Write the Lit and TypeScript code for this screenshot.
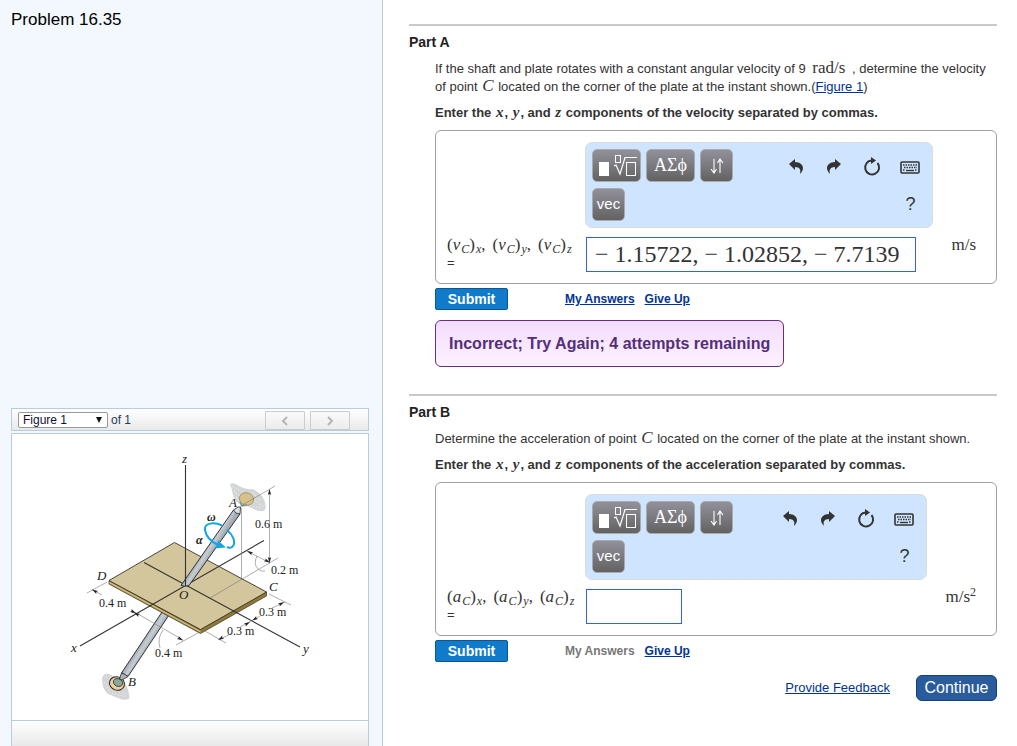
import { LitElement, html, svg, css, nothing } from "lit";
import { customElement, property } from "lit/decorators.js";

@customElement("plate-figure")
class PlateFigure extends LitElement {
  static styles = css`
    :host { display: block; }
    .drawing { display: block; width: 100%; height: auto; }
    .label { font: 12px "Liberation Serif", serif; fill: #222; }
    .name { font: italic 13px "Liberation Serif", serif; fill: #222; }
    .greek { font: italic bold 12px "Liberation Serif", serif; fill: #222; }
    .axis { stroke: #333; stroke-width: 1.1; fill: none; }
    .thin { stroke: #777; stroke-width: 0.6; fill: none; }
    .head { fill: #222; }
    .cloud { fill: #d3d5d7; }
    .speckle { stroke: #eceded; stroke-width: 1.2; stroke-dasharray: 1 2; fill: none; }
    .top { fill: #d3c69c; stroke: #39342a; stroke-width: 0.9; }
    .side { fill: #8f7a35; stroke: #39342a; stroke-width: 0.7; }
    .shaft { stroke: #30343a; stroke-width: 1; }
    .spin { fill: none; stroke: #16a5e4; stroke-width: 2; }
    .spin-head { fill: #16a5e4; }
  `;

  private arrow(x: number, y: number, angle: number) {
    return svg`<path class="head" d="M0 0L-6 -1.7L-4.8 0L-6 1.7Z" transform="translate(${x} ${y}) rotate(${angle})"></path>`;
  }

  render() {
    return html`
      <svg class="drawing" viewBox="12 434 356 286" role="img" aria-label="Shaft AB with plate">
        <defs>
          <linearGradient id="steel" gradientUnits="userSpaceOnUse" x1="206" y1="545" x2="214" y2="550">
            <stop offset="0" stop-color="#9fa8af"></stop>
            <stop offset="0.5" stop-color="#c6cdd3"></stop>
            <stop offset="1" stop-color="#a3acb3"></stop>
          </linearGradient>
          <linearGradient id="steel2" gradientUnits="userSpaceOnUse" x1="141" y1="642" x2="149" y2="647">
            <stop offset="0" stop-color="#9fa8af"></stop>
            <stop offset="0.5" stop-color="#c6cdd3"></stop>
            <stop offset="1" stop-color="#a3acb3"></stop>
          </linearGradient>
        </defs>

        <path class="cloud" d="M230 484Q234 482 239 486Q245 490 252 489Q258 491 262 496Q267 503 265 510Q261 513 254 509Q248 506 241 505Q234 501 233 495Q232 489 230 484Z"></path>
        <path class="speckle" d="M233 487L243 492M234 491L241 497M236 497L240 502M253 493L261 501M250 506L262 508M255 500L263 507"></path>
        <path class="cloud" d="M102 679Q103 673 109 674Q116 678 121 679Q127 684 128 690Q130 696 129 699Q123 701 118 698Q113 696 108 694Q102 689 102 679Z"></path>
        <path class="speckle" d="M104 682L110 692M112 693L126 697M119 692L127 694M106 677L110 677"></path>

        <path class="shaft" fill="url(#steel2)" d="M162 612L121.500 673L128 676.500L169 615Z"></path>
        <ellipse cx="117" cy="683.5" rx="7.6" ry="6.7" fill="#ead09a" stroke="#222" transform="rotate(18 117 683.5)"></ellipse>
        <ellipse cx="118" cy="682.5" rx="4.8" ry="3.8" fill="#8ba69b" stroke="#222" stroke-width=".7" transform="rotate(24 118 682.5)"></ellipse>
        <path d="M119.500 679L121.500 673Q125 674 128 676.500L122 680Z" fill="#aeb6b8" stroke="#222" stroke-width=".8"></path>

        <path class="side" d="M109 580.500V584L200.500 633.500L266.500 596V592L200.500 629.500Z"></path>
        <path d="M109.500 581.500L200.500 631L200.500 632.500L109.500 583.500Z" fill="#cdbb7a"></path>
        <path class="top" d="M174.500 542.500L266.500 592L200.500 629.500L109 580.500Z"></path>

        <path class="axis" d="M185.500 465V586M144 562.500L300 647M80 646L264 540.500"></path>
        <path class="thin" d="M210 598L278 558M241.500 508V580M269.500 490V562M247 551L270 563M92 589.500L102 595M131 610L183 640M87 593L107 582M176 645L198 633M205 631L226 643M269 594L291 605M219 640L232 633M272 608L285 602M251 621L240 627M254 620L260 616"></path>
        <path class="thin" d="M257 556Q253 564 258 569Q261 572 265 571M163 630Q157 638 160 648"></path>

        <path class="shaft" fill="url(#steel)" d="M181 585.500L233.500 510L240 514L189 585.500Q184 587 181 585.500Z"></path>
        <ellipse cx="246.5" cy="499" rx="7.2" ry="6.2" fill="#d9c18b" stroke="#9a8657" stroke-width=".7" transform="rotate(18 246.5 499)"></ellipse>
        <path d="M240 502L242 506L247 505" stroke="#719998" fill="none" stroke-width="1.5"></path>
        <path d="M233.500 510L238 507L240.500 507L240 514Q235 514 233.500 510Z" fill="#dce0e2" stroke="#222" stroke-width=".8"></path>
        <path class="thin" d="M240 506.500L275 486"></path>
        <path class="axis" d="M185.500 575V586"></path>

        <path class="spin" d="M222 525.500C214 521.500 204 523 205 530C206 537 212 542 218 545M227 530C233 535 236 542 233 546Q231 549 227 547"></path>
        <path class="spin-head" d="M226 547.500L214.500 548.500L217 545.500L218 540.500Z"></path>

        ${this.arrow(269.5, 489, -90)}${this.arrow(269.5, 563, 90)}
        ${this.arrow(247, 551, 207)}${this.arrow(270, 562.5, 27)}
        ${this.arrow(92, 589.5, 210)}${this.arrow(136, 613.5, 30)}${this.arrow(134, 612.5, 210)}${this.arrow(183, 640.5, 30)}
        ${this.arrow(218, 640, 150)}${this.arrow(250, 622, -30)}${this.arrow(252, 620.5, 150)}${this.arrow(284, 602, -30)}

        <text class="name" x="182" y="463">z</text>
        <text class="name" x="229" y="507">A</text>
        <text class="greek" x="207" y="521">ω</text>
        <text class="greek" x="196" y="544">α</text>
        <text class="name" x="97" y="580">D</text>
        <text class="name" x="179" y="599">O</text>
        <text class="name" x="269" y="591">C</text>
        <text class="name" x="71" y="652">x</text>
        <text class="name" x="303" y="653">y</text>
        <text class="name" x="128" y="686">B</text>
        <text class="label" x="255" y="528">0.6 m</text>
        <text class="label" x="271" y="574">0.2 m</text>
        <text class="label" x="99" y="607">0.4 m</text>
        <text class="label" x="259" y="616">0.3 m</text>
        <text class="label" x="227" y="635">0.3 m</text>
        <text class="label" x="155" y="657">0.4 m</text>
      </svg>`;
  }
}

@customElement("answer-box")
class AnswerBox extends LitElement {
  @property() symbol = "v";
  @property() value = "";
  @property({ type: Boolean }) squared = false;

  static styles = css`
    :host {
      display: grid;
      grid-template-columns: 138px minmax(0, 1fr) auto;
      padding: 11px 20px 11px 11px;
      border: 1px solid #a0a0a0;
      border-radius: 6px;
      font: 13px "Liberation Sans", Arial, sans-serif;
      color: #333;
    }
    .label { grid-row: 2; line-height: 20px; padding-top: 7px; }
    .math { display: flex; white-space: nowrap; gap: 7px; font: 17px/20px "Liberation Serif", serif; }
    .sub { font-size: 12px; line-height: 0; vertical-align: -3px; margin-left: 1px; }
    .equals { display: block; line-height: 16px; }
    .tools {
      grid-column: 2;
      box-sizing: border-box;
      height: 86px;
      display: flex;
      justify-content: space-between;
      padding: 6px 12px 6px 6px;
      border: 1px solid #dcdcdc;
      border-radius: 7px;
      background: #cfe5ff;
    }
    .group { display: grid; grid-template-columns: 49px 49px 33px; gap: 6px 5px; align-content: start; }
    .key {
      height: 33px;
      padding: 0;
      border: 1px solid #aaa;
      border-radius: 5px;
      background: linear-gradient(#92919b, #626262);
      color: #fff;
      display: flex;
      align-items: center;
      justify-content: center;
    }
    .greek { font: 18px "Liberation Serif", serif; }
    .vec { width: 33px; font: 15px "Liberation Sans", Arial, sans-serif; padding-bottom: 3px; }
    .actions { display: grid; grid-template-columns: repeat(4, 20px); column-gap: 18px; grid-template-rows: 36px 36px; }
    .action { border: 0; padding: 0; background: none; color: #333; display: flex; align-items: center; justify-content: center; }
    .help { grid-column: 4; font: 18px "Liberation Sans", Arial, sans-serif; padding-top: 2px; }
    .field {
      grid-column: 2;
      grid-row: 2;
      justify-self: start;
      box-sizing: border-box;
      width: 96px;
      height: 35px;
      margin: 9px 0 0 1px;
      padding: 0 8px;
      border: 1px solid #36c;
      border-radius: 0;
      background: #fff;
      color: #333;
      font: 24px "Liberation Serif", serif;
      outline: 0;
    }
    .filled { width: calc(100% - 18px); }
    .unit { grid-column: 3; grid-row: 2; margin-left: 18px; padding-top: 7px; font: 17px/20px "Liberation Serif", serif; }
    .power { font-size: 12px; line-height: 0; vertical-align: 6px; }
  `;

  render() {
    return html`
      <div class="tools">
        <div class="group">
          <button class="key" aria-label="Templates">
            <svg width="40" height="26" viewBox="0 0 40 26" fill="none" stroke="#fff">
              <rect x="2" y="9" width="10" height="14" fill="#fff" stroke="none"></rect>
              <rect x="18.500" y="2.500" width="5" height="7"></rect>
              <path d="M17 13l2-1 4 9 5-16.500h12" stroke-width="1.200"></path>
              <rect x="29.500" y="9.500" width="9" height="13"></rect>
            </svg>
          </button>
          <button class="key greek">ΑΣϕ</button>
          <button class="key" aria-label="Arrows">
            <svg width="16" height="18" viewBox="0 0 16 18" fill="none" stroke="#fff" stroke-width="1.100">
              <path d="M5 2v14M2 12l3 4 2.500-4M11 16V2M8.500 6L11 2l3 4"></path>
            </svg>
          </button>
          <button class="key vec">vec</button>
        </div>
        <div class="actions">
          <button class="action" aria-label="Undo">
            <svg width="16" height="18" viewBox="0 0 16 18" fill="#333"><path d="M1 6L7 1v3c5 0 8 3 8 6 0 2-1 4-3 6 1-4 0-7-5-7v3z"></path></svg>
          </button>
          <button class="action" aria-label="Redo">
            <svg width="16" height="18" viewBox="0 0 16 18" fill="#333"><path d="M15 6L9 1v3C4 4 1 7 1 10c0 2 1 4 3 6-1-4 0-7 5-7v3z"></path></svg>
          </button>
          <button class="action" aria-label="Reset">
            <svg width="18" height="20" viewBox="0 0 18 20"><path d="M9 3.500a7 7 0 1 0 5.500 2.500" fill="none" stroke="#333" stroke-width="2"></path><path d="M8 0l5 3.500-5 3.500z" fill="#333"></path></svg>
          </button>
          <button class="action" aria-label="Keyboard">
            <svg width="20" height="13" viewBox="0 0 20 13">
              <rect x="1" y="1" width="18" height="11" rx="1" fill="none" stroke="#333" stroke-width="1.600"></rect>
              <path d="M3 4h14M4 6.500h13M3 9h2M15 9h2" stroke="#333" stroke-width="1.300" stroke-dasharray="1.500 1"></path>
              <path d="M6 9.500h8" stroke="#333" stroke-width="1.400"></path>
            </svg>
          </button>
          <button class="action help" aria-label="Help">?</button>
        </div>
      </div>
      <label class="label" for="answer">
        <span class="math">${["x", "y", "z"].map((axis) => html`<span>(<i>${this.symbol}</i><i class="sub">C</i>)<i class="sub">${axis}</i>${axis === "z" ? nothing : ","}</span>`)}</span>
        <span class="equals">=</span>
      </label>
      <input id="answer" class="field ${this.value ? "filled" : ""}" .value=${this.value} />
      <span class="unit">m/s${this.squared ? html`<span class="power">2</span>` : nothing}</span>
    `;
  }
}

@customElement("app-root")
class AppRoot extends LitElement {
  static styles = css`
    :host {
      display: grid;
      grid-template-columns: minmax(0, 383fr) minmax(0, 634fr);
      min-height: 100vh;
      font: 13px/18px "Liberation Sans", Arial, sans-serif;
      color: #333;
      background: #fff;
    }
    .side {
      box-sizing: border-box;
      display: flex;
      flex-direction: column;
      padding: 11px 13px 0 11px;
      border-right: 1px solid #b6cce0;
      background: #f3f8ff;
    }
    .title { margin: 0; font-size: 17px; font-weight: normal; line-height: 18px; color: #000; }
    .picker {
      box-sizing: border-box;
      height: 23px;
      margin-top: auto;
      display: flex;
      align-items: center;
      gap: 3px;
      padding: 0 18px 0 6px;
      border: 1px solid #b6cce0;
      background: linear-gradient(#fff, #e9e9e9);
      font-size: 12px;
      color: #1d3c63;
    }
    .choice { position: relative; display: flex; }
    .select {
      appearance: none;
      width: 90px;
      height: 16px;
      padding: 0 4px;
      border: 1px solid #999;
      border-radius: 2px;
      background: #fff;
      font: 12px/14px "Liberation Sans", Arial, sans-serif;
      color: #113;
    }
    .caret { position: absolute; right: 5px; top: 4px; pointer-events: none; }
    .step {
      width: 40px;
      height: 19px;
      padding: 0;
      border: 1px solid #ccc;
      border-radius: 1px;
      background: linear-gradient(#fafafa, #ececec);
      display: flex;
      align-items: center;
      justify-content: center;
      align-self: flex-end;
    }
    .prev { margin: 0 2px 0 auto; }
    .picture { margin-top: 2px; border: 1px solid #b6cce0; background: #fff; }
    .footer { height: 25px; border: 1px solid #b6cce0; border-width: 0 1px; background: linear-gradient(#fff, #e9e9e9); }
    .main { padding: 24px 20px 20px 26px; }
    .part { border-top: 2px solid #c9c9c9; padding: 7px 0 0 26px; }
    .part + .part { margin-top: 27px; }
    .heading { margin: 0 0 9px -26px; font-size: 14px; line-height: 18px; color: #222; }
    .text { margin: 0 0 8px; }
    .task { margin: 0 0 9px; font-weight: bold; line-height: 17px; }
    .m { margin: 0 1px; font-family: "Liberation Serif", serif; font-size: 17px; line-height: 0; }
    .s { margin: 0 1px; font-family: "Liberation Serif", serif; font-size: 15px; line-height: 0; }
    .quantity { margin: 0 3px; }
    a { color: #039; }
    .row { display: flex; align-items: center; gap: 10px; margin-top: 4px; font-size: 12px; font-weight: bold; }
    .submit {
      width: 73px;
      height: 22px;
      margin-right: 47px;
      padding: 0;
      border: 1px solid #0a5792;
      border-radius: 2px;
      background: #107acb;
      color: #fff;
      font: bold 14px "Liberation Sans", Arial, sans-serif;
    }
    .off { color: #777; }
    .feedback {
      width: fit-content;
      margin-top: 10px;
      padding: 12px 13px;
      border: 1px solid #6b2c86;
      border-radius: 6px;
      background: linear-gradient(#f3dcfd, #fdf2ff);
      color: #532f79;
      font-size: 16px;
      font-weight: bold;
      line-height: 21px;
    }
    .end { display: flex; justify-content: flex-end; align-items: center; gap: 26px; margin-top: 13px; }
    .continue {
      width: 81px;
      height: 26px;
      padding: 0;
      border: 1px solid #113f75;
      border-radius: 6px;
      background: #2a5b9d;
      color: #fff;
      font: 16px "Liberation Sans", Arial, sans-serif;
    }
  `;

  render() {
    return html`
      <aside class="side">
        <h1 class="title">Problem 16.35</h1>
        <div class="picker">
          <span class="choice">
            <select class="select" id="figure" aria-label="Figure"><option>Figure 1</option></select>
            <svg class="caret" width="8" height="8" viewBox="0 0 8 8"><path d="M1 1h6L4 7z" fill="#111"></path></svg>
          </span>
          <label for="figure">of 1</label>
          <button class="step prev" aria-label="Previous figure">
            <svg width="8" height="10" viewBox="0 0 8 10" fill="none" stroke="#b5b5b5" stroke-width="2"><path d="M6 1L2 5l4 4"></path></svg>
          </button>
          <button class="step" aria-label="Next figure">
            <svg width="8" height="10" viewBox="0 0 8 10" fill="none" stroke="#b5b5b5" stroke-width="2"><path d="M2 1l4 4-4 4"></path></svg>
          </button>
        </div>
        <div class="picture"><plate-figure></plate-figure></div>
        <div class="footer"></div>
      </aside>
      <main class="main">
        <section class="part">
          <h2 class="heading">Part A</h2>
          <p class="text">If the shaft and plate rotates with a constant angular velocity of 9 <span class="m quantity">rad/s</span> , determine the velocity of point <i class="m">C</i> located on the corner of the plate at the instant shown.(<a href="#figure">Figure 1</a>)</p>
          <p class="task">Enter the <i class="s">x</i>, <i class="s">y</i>, and <i class="s">z</i> components of the velocity separated by commas.</p>
          <answer-box symbol="v" value="− 1.15722, − 1.02852, − 7.7139"></answer-box>
          <div class="row">
            <button class="submit">Submit</button>
            <a href="#answers">My Answers</a>
            <a href="#give-up">Give Up</a>
          </div>
          <div class="feedback">Incorrect; Try Again; 4 attempts remaining</div>
        </section>
        <section class="part">
          <h2 class="heading">Part B</h2>
          <p class="text">Determine the acceleration of point <i class="m">C</i> located on the corner of the plate at the instant shown.</p>
          <p class="task">Enter the <i class="s">x</i>, <i class="s">y</i>, and <i class="s">z</i> components of the acceleration separated by commas.</p>
          <answer-box symbol="a" squared></answer-box>
          <div class="row">
            <button class="submit">Submit</button>
            <span class="off">My Answers</span>
            <a href="#give-up">Give Up</a>
          </div>
        </section>
        <div class="end">
          <a href="#feedback">Provide Feedback</a>
          <button class="continue">Continue</button>
        </div>
      </main>
    `;
  }
}
